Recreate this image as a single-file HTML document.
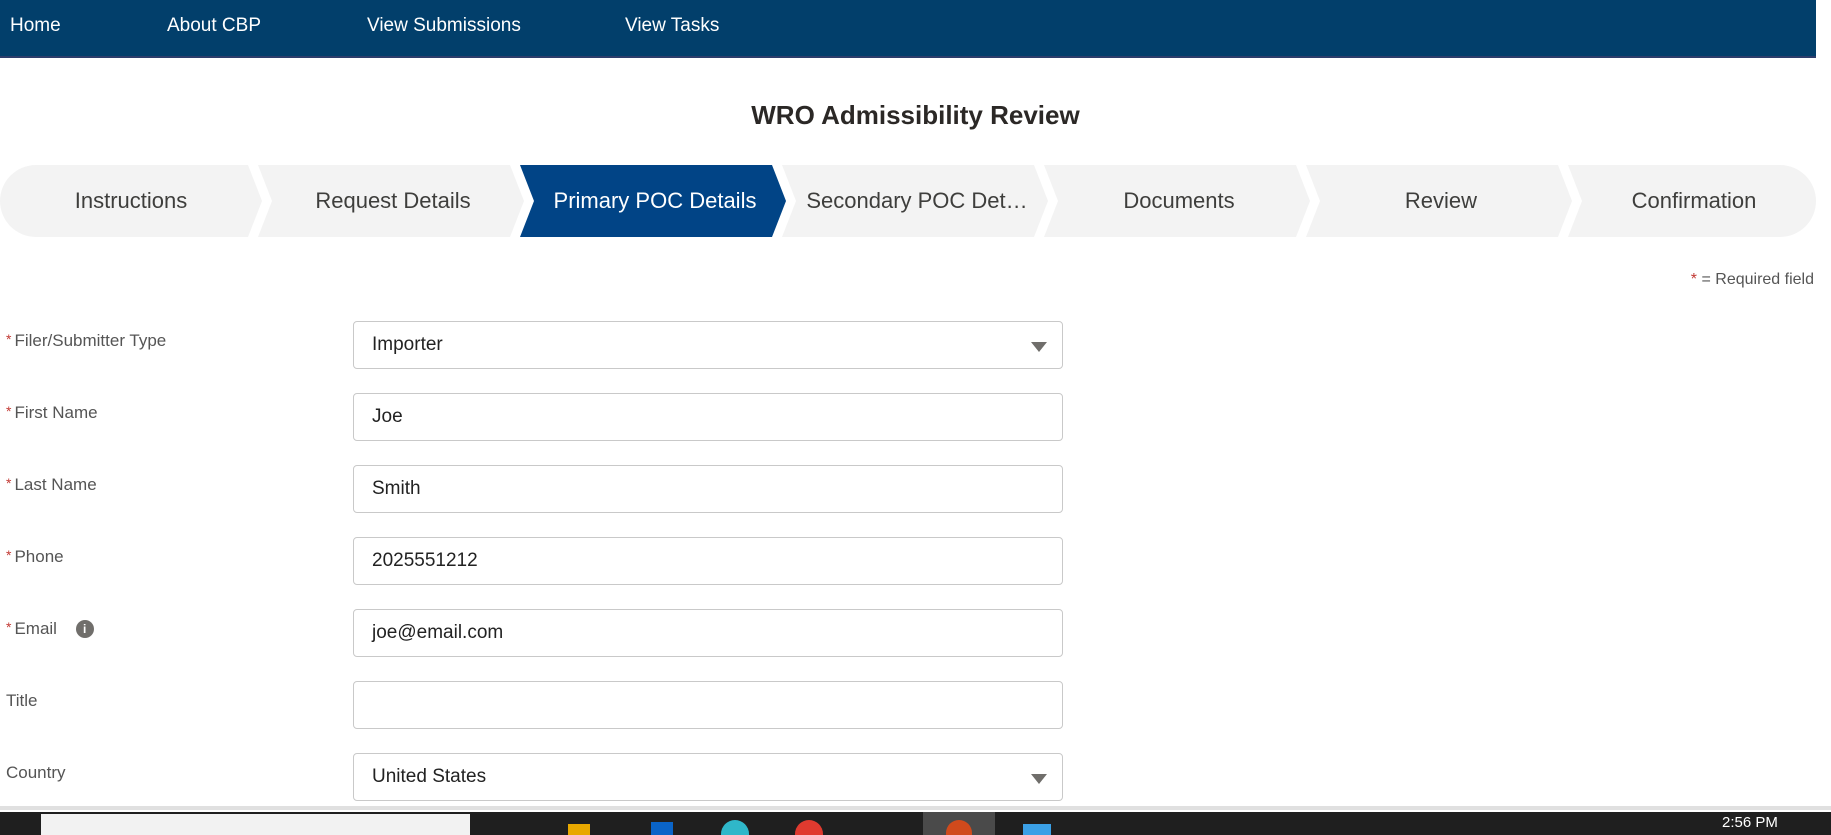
<!DOCTYPE html>
<html><head><style>
*{box-sizing:border-box;margin:0;padding:0}
body{width:1831px;height:835px;overflow:hidden;background:#fff;font-family:"Liberation Sans",sans-serif;position:relative}
.nav{position:absolute;left:0;top:0;width:1816px;height:58px;background:#023f6b;border-bottom:2px solid #2c3d6b}
.nav span{position:absolute;top:15px;color:#fff;font-size:19px}
.sb{position:absolute;right:0;top:0;width:15px;height:808px;background:#fff}
h1{position:absolute;left:0;width:1831px;top:100px;text-align:center;font-size:26px;color:#2b2826}
.path{position:absolute;top:165px;height:72px;left:0;width:1816px}
.step{position:absolute;top:0;height:72px;font-size:22px;color:#3e3e3c;display:flex;align-items:center;justify-content:center}
.req{position:absolute;right:17px;top:271px;font-size:16px;color:#555}
.lbl{position:absolute;left:6px;font-size:17px;color:#555}
.lbl b{color:#c23934;font-weight:normal;font-size:14px;margin-right:3px;vertical-align:2px}
.inp{position:absolute;left:353px;width:710px;height:48px;border:1px solid #c9c9c9;border-radius:4px;font-size:19px;color:#222;padding:0 0 0 18px;display:flex;align-items:center}
.arr{position:absolute;right:15px;top:20px;width:0;height:0;border-left:8px solid transparent;border-right:8px solid transparent;border-top:10px solid #706e6b}
.line{position:absolute;left:0;top:806px;width:1831px;height:4px;background:#e0e0e0}
.tb{position:absolute;left:0;top:812px;width:1831px;height:23px;background:#1f1f1f}
</style></head><body>
<div class="nav"><span style="left:10px">Home</span><span style="left:167px">About CBP</span><span style="left:367px">View Submissions</span><span style="left:625px">View Tasks</span></div>
<div class="sb"></div>
<h1>WRO Admissibility Review</h1>
<svg class="path" width="1816" height="72" style="position:absolute;left:0;top:165px">
<path d="M36 0H248L262 36L248 72H36A36 36 0 0 1 36 0Z" fill="#f3f3f3"/>
<path d="M258 0H510L524 36L510 72H258L272 36Z" fill="#f3f3f3"/>
<path d="M520 0H772L786 36L772 72H520L534 36Z" fill="#014486"/>
<path d="M782 0H1034L1048 36L1034 72H782L796 36Z" fill="#f3f3f3"/>
<path d="M1044 0H1296L1310 36L1296 72H1044L1058 36Z" fill="#f3f3f3"/>
<path d="M1306 0H1558L1572 36L1558 72H1306L1320 36Z" fill="#f3f3f3"/>
<path d="M1568 0H1780A36 36 0 0 1 1780 72H1568L1582 36Z" fill="#f3f3f3"/>
</svg>
<div class="path">
<div class="step" style="left:0;width:262px">Instructions</div>
<div class="step" style="left:262px;width:262px">Request Details</div>
<div class="step" style="left:524px;width:262px;color:#fff">Primary POC Details</div>
<div class="step" style="left:786px;width:262px">Secondary POC Det…</div>
<div class="step" style="left:1048px;width:262px">Documents</div>
<div class="step" style="left:1310px;width:262px">Review</div>
<div class="step" style="left:1572px;width:244px">Confirmation</div>
</div>
<div class="req"><span style="color:#c23934">*</span> = Required field</div>

<div class="lbl" style="top:331px"><b>*</b>Filer/Submitter Type</div>
<div class="inp" style="top:321px">Importer<div class="arr"></div></div>
<div class="lbl" style="top:403px"><b>*</b>First Name</div>
<div class="inp" style="top:393px">Joe</div>
<div class="lbl" style="top:475px"><b>*</b>Last Name</div>
<div class="inp" style="top:465px">Smith</div>
<div class="lbl" style="top:547px"><b>*</b>Phone</div>
<div class="inp" style="top:537px">2025551212</div>
<div class="lbl" style="top:619px"><b>*</b>Email <span style="display:inline-block;width:18px;height:18px;border-radius:50%;background:#706e6b;color:#fff;font-size:12px;text-align:center;line-height:18px;font-weight:bold;margin-left:14px;vertical-align:1px">i</span></div>
<div class="inp" style="top:609px">joe@email.com</div>
<div class="lbl" style="top:691px">Title</div>
<div class="inp" style="top:681px"></div>
<div class="lbl" style="top:763px">Country</div>
<div class="inp" style="top:753px">United States<div class="arr"></div></div>

<div class="line"></div>
<div class="tb">
<div style="position:absolute;left:41px;top:2px;width:429px;height:21px;background:#f2f2f2"></div>
<div style="position:absolute;left:923px;top:0;width:72px;height:23px;background:#4a4a4a"></div>
<div style="position:absolute;left:568px;top:12px;width:22px;height:11px;background:#e8a800"></div>
<div style="position:absolute;left:651px;top:10px;width:22px;height:13px;background:#0a64c8"></div>
<div style="position:absolute;left:721px;top:8px;width:28px;height:15px;border-radius:14px 14px 0 0;background:#2fb7c9"></div>
<div style="position:absolute;left:795px;top:8px;width:28px;height:15px;border-radius:14px 14px 0 0;background:#e03a2f"></div>
<div style="position:absolute;left:946px;top:8px;width:26px;height:15px;border-radius:13px 13px 0 0;background:#d04a1c"></div>
<div style="position:absolute;left:1023px;top:12px;width:28px;height:11px;background:#3ba0e6"></div>
<div style="position:absolute;left:1722px;top:2px;color:#fff;font-size:15px">2:56 PM</div>
</div>
</body></html>
